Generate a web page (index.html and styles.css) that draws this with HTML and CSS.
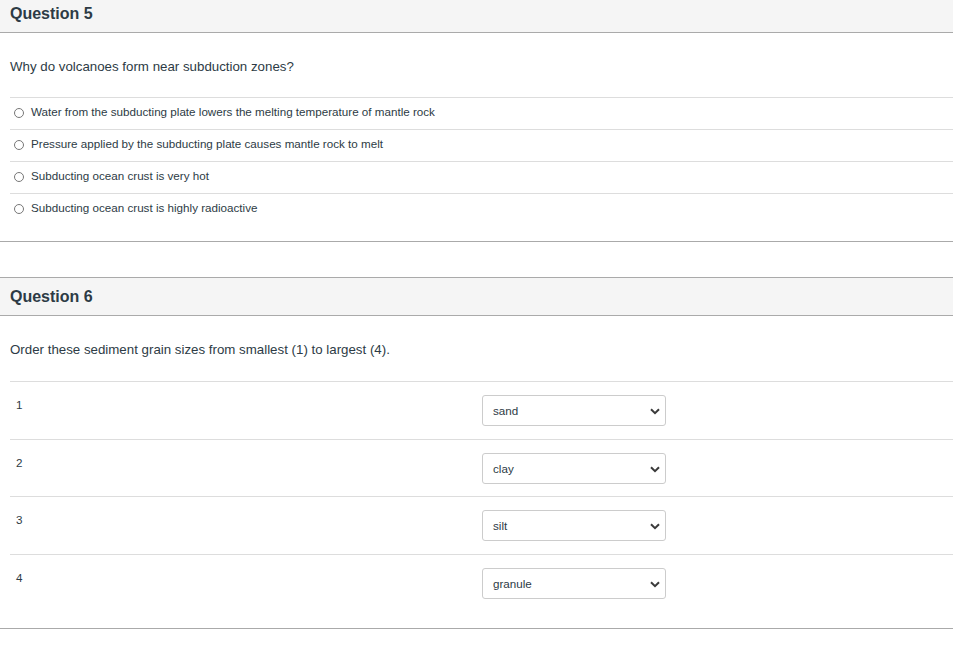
FILE: index.html
```html
<!DOCTYPE html>
<html>
<head>
<meta charset="utf-8">
<link rel="stylesheet" href="styles.css">
</head>
<body>
<div class="quiz">
  <div class="question first">
    <div class="q-header">Question 5</div>
    <div class="q-body">
      <div class="q-text">Why do volcanoes form near subduction zones?</div>
      <div class="answers">
        <div class="answer"><span class="radio"></span><span>Water from the subducting plate lowers the melting temperature of mantle rock</span></div>
        <div class="answer"><span class="radio"></span><span>Pressure applied by the subducting plate causes mantle rock to melt</span></div>
        <div class="answer"><span class="radio"></span><span>Subducting ocean crust is very hot</span></div>
        <div class="answer"><span class="radio"></span><span>Subducting ocean crust is highly radioactive</span></div>
      </div>
    </div>
  </div>

  <div class="question">
    <div class="q-header">Question 6</div>
    <div class="q-body matching">
      <div class="q-text">Order these sediment grain sizes from smallest (1) to largest (4).</div>
      <div class="matches">
        <div class="match">
          <div class="m-label">1</div>
          <div class="select"><span class="s-text">sand</span><svg class="chev" width="10" height="7" viewBox="0 0 10 7"><path d="M1 1.2 L5 5.2 L9 1.2" fill="none" stroke="#3a3a3a" stroke-width="2"/></svg></div>
        </div>
        <div class="match">
          <div class="m-label">2</div>
          <div class="select"><span class="s-text">clay</span><svg class="chev" width="10" height="7" viewBox="0 0 10 7"><path d="M1 1.2 L5 5.2 L9 1.2" fill="none" stroke="#3a3a3a" stroke-width="2"/></svg></div>
        </div>
        <div class="match">
          <div class="m-label">3</div>
          <div class="select"><span class="s-text">silt</span><svg class="chev" width="10" height="7" viewBox="0 0 10 7"><path d="M1 1.2 L5 5.2 L9 1.2" fill="none" stroke="#3a3a3a" stroke-width="2"/></svg></div>
        </div>
        <div class="match">
          <div class="m-label">4</div>
          <div class="select"><span class="s-text">granule</span><svg class="chev" width="10" height="7" viewBox="0 0 10 7"><path d="M1 1.2 L5 5.2 L9 1.2" fill="none" stroke="#3a3a3a" stroke-width="2"/></svg></div>
        </div>
      </div>
    </div>
  </div>
</div>
</body>
</html>
```

FILE: styles.css
```css
html, body {
  margin: 0;
  padding: 0;
  background: #ffffff;
}
body {
  font-family: "Liberation Sans", Arial, sans-serif;
  color: #2d3b45;
  overflow: hidden;
}
.quiz {
  width: 1000px;
}
.question {
  border-top: 1px solid #aaaaaa;
  border-bottom: 1px solid #aaaaaa;
  margin-bottom: 35px;
}
.question.first {
  margin-top: -6px;
}
.q-header {
  background: #f5f5f5;
  border-bottom: 1px solid #aaaaaa;
  height: 37px;
  line-height: 37px;
  padding: 0 10px;
  font-size: 16px;
  font-weight: bold;
  color: #2d3b45;
}
.q-body {
  padding: 24px 0 16px 10px;
}
.q-body.matching {
  padding-bottom: 17px;
}
.q-text {
  font-size: 13.3px;
  line-height: 20px;
  margin-bottom: 20px;
}
.matching .q-text {
  margin-bottom: 21px;
}
.answers {
  display: flex;
  flex-direction: column;
}
.answer {
  border-top: 1px solid #dddddd;
  padding: 6px 0 9px 4px;
  font-size: 11.65px;
  line-height: 16px;
  display: flex;
  align-items: center;
  gap: 7px;
}
.radio {
  width: 8px;
  height: 8px;
  border: 1px solid #777777;
  border-radius: 50%;
  flex: none;
  margin-top: 1px;
}
.matches {
  display: flex;
  flex-direction: column;
}
.match {
  border-top: 1px solid #dddddd;
  padding: 13px 0 12.5px 0;
  display: grid;
  grid-template-columns: 472px 1fr;
  align-items: start;
}
.m-label {
  padding: 2px 0 0 6px;
  font-size: 11.65px;
  line-height: 16px;
}
.select {
  position: relative;
  box-sizing: border-box;
  width: 184px;
  height: 31px;
  border: 1px solid #cccccc;
  border-radius: 3px;
  background: #ffffff;
  display: flex;
  align-items: center;
  padding-left: 10px;
  font-size: 11.65px;
}
.chev {
  position: absolute;
  right: 5px;
  top: 12px;
}
```
